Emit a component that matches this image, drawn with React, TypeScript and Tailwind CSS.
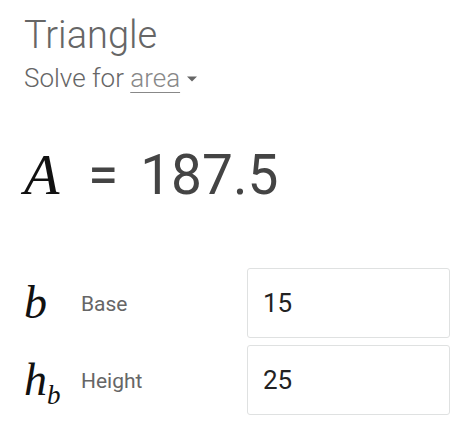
import { useState } from "react";

const serif = { fontFamily: '"Liberation Serif", "DejaVu Serif", serif' };

function VarRow({
  symbol,
  sub,
  label,
  value,
}: {
  symbol: string;
  sub?: string;
  label: string;
  value: string;
}) {
  const [v, setV] = useState(value);
  return (
    <div className="flex items-center">
      <div className="flex w-[57px] items-baseline text-[#111]" style={serif}>
        <span className="text-[46px] italic leading-none">{symbol}</span>
        {sub && <span className="relative top-[9px] text-[27px] italic leading-none">{sub}</span>}
      </div>
      <span className="mt-[4px] flex-1 text-[21px] text-[#666]">{label}</span>
      <input
        value={v}
        onChange={(e) => setV(e.target.value)}
        className="h-[70px] w-[203px] rounded-[3px] border border-[#dfe1e1] bg-white px-[15px] text-[26px] text-[#222] outline-none"
      />
    </div>
  );
}

export default function App() {
  return (
    <div className="min-h-screen bg-white pl-[24px] pr-[24px] pt-[12px] font-['Roboto',sans-serif]">
      <h1 className="text-[38px] font-light leading-[46px] text-[#666]">Triangle</h1>
      <div className="mt-[4px] flex items-center text-[26px] font-light leading-[32px] text-[#666]">
        <span>Solve for&nbsp;</span>
        <button className="font-light text-[#888] underline decoration-1 underline-offset-[5px]">area</button>
        <svg width="12" height="8" viewBox="0 0 12 8" className="ml-[6px] mt-[2px]">
          <path d="M1 1.5h10L6 6.5z" fill="#666" />
        </svg>
      </div>

      <div className="mt-[52px] flex items-baseline text-[#444]">
        <span className="w-[64px] text-[58px] italic leading-none text-[#111]" style={serif}>
          A
        </span>
        <span className="text-[55px] leading-none">=</span>
        <span className="ml-[22px] text-[55px] leading-none">187.5</span>
      </div>

      <div className="mt-[64px] flex flex-col gap-[7px]">
        <VarRow symbol="b" label="Base" value="15" />
        <VarRow symbol="h" sub="b" label="Height" value="25" />
      </div>
    </div>
  );
}
